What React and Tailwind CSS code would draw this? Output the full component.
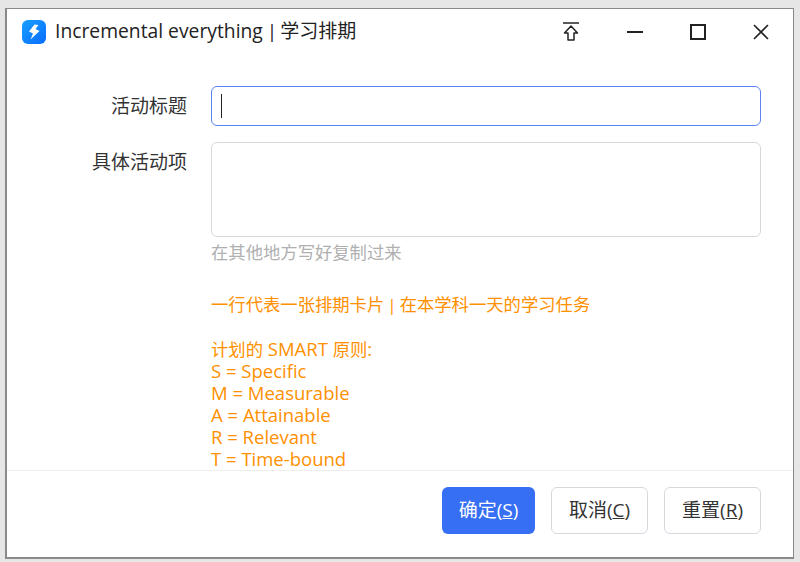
import React from "react";

const font = { fontFamily: '"Open Sans", "Noto Sans CJK SC", sans-serif' };

function C({ children }) {
  return <span className="text-[17.33px]">{children}</span>;
}

function Btn({ label, k, primary }) {
  return (
    <button
      className={
        primary
          ? "h-[47px] w-[93px] rounded-[6px] bg-[#366ef4] text-white text-[19px] flex items-center justify-center"
          : "h-[47px] w-[97px] rounded-[6px] bg-white border border-[#d5d9de] text-[#333] text-[19px] flex items-center justify-center"
      }
    >
      {label}(<span className="underline">{k}</span>)
    </button>
  );
}

export default function App() {
  return (
    <div style={font} className="w-[800px] h-[562px] bg-[#e6e6e6] pt-[8px] pl-[5px] overflow-hidden">
      <div className="w-[789px] h-[551px] bg-white border border-[#8a8a8a] border-b-2 border-l-2 flex flex-col">
        <div className="h-[45px] shrink-0 flex items-center pl-[15px]">
          <svg width="24" height="24" viewBox="0 0 24 24" className="mr-[9px]">
            <defs>
              <linearGradient id="g" x1="0" y1="0" x2="1" y2="1">
                <stop offset="0" stopColor="#18a0ff" />
                <stop offset="1" stopColor="#0a6cff" />
              </linearGradient>
            </defs>
            <rect width="24" height="24" rx="6" fill="url(#g)" />
            <path d="M12.5 4.5L16.5 5L13.5 9L17.5 11L8.5 19.5L11 13.5L7 11.5Z" fill="#fff" />
          </svg>
          <span className="text-[19.3px] text-[#222] whitespace-nowrap leading-none mb-[2px]">
            Incremental everything
            <span className="ml-[4px] mr-[3px] text-[19px]">|</span>
            <span className="text-[19px]">学习排期</span>
          </span>
          <div className="ml-auto flex items-center h-full">
            <svg width="18" height="20" viewBox="0 0 18 20" fill="none" stroke="#222" strokeWidth="1.5" className="mr-[47px]">
              <path d="M1 1H17" />
              <path d="M9 4L15.5 11H12V18H6V11H2.5Z" strokeLinejoin="round" />
            </svg>
            <div className="w-[16px] h-[2px] bg-[#222] mr-[47px]" />
            <div className="w-[16px] h-[16px] border-2 border-[#222] mr-[46px]" />
            <svg width="18" height="18" viewBox="0 0 18 18" stroke="#222" strokeWidth="1.6" className="mr-[23px]">
              <path d="M2 2L16 16M16 2L2 16" />
            </svg>
          </div>
        </div>

        <div className="flex-1 min-h-0 overflow-hidden pl-[204px] pr-[32px] pt-[32px] relative">
          <div className="flex items-center h-[40px]">
            <label className="absolute left-0 w-[180px] text-right text-[19px] text-[#333]">活动标题</label>
            <div className="w-full h-[40px] rounded-[6px] border border-[#5b84ee] flex items-center pl-[9px]">
              <div className="w-[1px] h-[24px] bg-[#222]" />
            </div>
          </div>
          <div className="mt-[16px] relative">
            <label className="absolute left-[-204px] w-[180px] top-[6px] text-right text-[19px] text-[#333]">具体活动项</label>
            <div className="w-full h-[95px] rounded-[6px] border border-[#d5d9de]" />
          </div>
          <div className="mt-[1px] text-[17.33px] leading-[28px] text-[#b0b0b0]">在其他地方写好复制过来</div>
          <div className="mt-[27px] text-[18.5px] leading-[22px] text-[#ff9000] whitespace-nowrap">
            <div>
              <C>一行代表一张排期卡片</C>
              <span className="mx-[3px] text-[17px]">|</span>
              <C>在本学科一天的学习任务</C>
            </div>
            <div className="h-[22px]" />
            <div>
              <C>计划的</C> SMART <C>原则</C>:
            </div>
            <div>S = Specific</div>
            <div>M = Measurable</div>
            <div>A = Attainable</div>
            <div>R = Relevant</div>
            <div>T = Time-bound</div>
          </div>
        </div>

        <div className="h-[87px] shrink-0 border-t border-[#eeeeee] flex items-center justify-end gap-[16px] pr-[32px] pb-[8px]">
          <Btn label="确定" k="S" primary />
          <Btn label="取消" k="C" />
          <Btn label="重置" k="R" />
        </div>
      </div>
    </div>
  );
}
